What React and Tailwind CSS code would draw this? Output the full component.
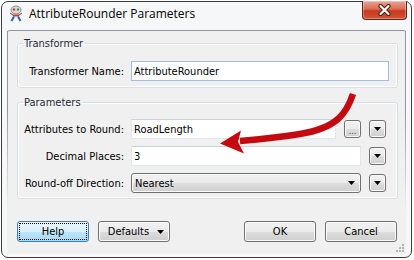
const btnFace =
  'flex items-center rounded-[3px] border border-[#707070] bg-[linear-gradient(#f2f2f2_0%,#ebebeb_50%,#dddddd_50%,#cfcfcf_100%)] shadow-[inset_0_0_0_1px_#fbfbfb]'

function DownArrow() {
  return (
    <svg width="7" height="4" viewBox="0 0 7 4">
      <path d="M0 0h7L3.5 4z" fill="#000" />
    </svg>
  )
}

function DropButton() {
  return (
    <div className={`${btnFace} ml-[8px] h-[18px] w-[17px] justify-center`}>
      <DownArrow />
    </div>
  )
}

function TextBox({ value, width, focused }) {
  return (
    <div
      className={`ml-[7px] flex h-[20px] items-center bg-white pl-[2px] ${width} ${
        focused ? 'border border-[#9dc0e3]' : 'border border-[#e1e6eb] border-t-[#cdd3da]'
      }`}
    >
      {value}
    </div>
  )
}

function Row({ label, children }) {
  return (
    <div className="flex h-[20px] items-center">
      <div className="w-[106px] text-right">{label}</div>
      {children}
    </div>
  )
}

function TitleIcon() {
  return (
    <svg width="16" height="17" viewBox="0 0 16 17">
      <ellipse cx="8" cy="5" rx="5" ry="4" fill="#d9d9d9" stroke="#8a8a8a" />
      <circle cx="6" cy="4.5" r="1.2" fill="#d23b2b" />
      <circle cx="10" cy="4.5" r="1.2" fill="#3f9b3a" />
      <path d="M4 9.5h8l-1.5 2h-5z" fill="#d8362a" />
      <path d="M6 11.5l-2.5 4.5M10 11.5l2.5 4.5" stroke="#2f5fb5" strokeWidth="2" />
      <path d="M2 8l3 2M14 8l-3 2" stroke="#777" strokeWidth="1.2" />
    </svg>
  )
}

export default function App() {
  return (
    <div className="relative h-[260px] w-[414px] overflow-hidden bg-white pl-px pt-px text-[11px] leading-[13px] text-black font-['DejaVu_Sans_Condensed','Liberation_Sans',sans-serif]">
      <div className="flex h-[257px] w-[411px] flex-col rounded-[7px] border border-[#3c3c3c] bg-[#f6f7f8]">
        <div className="flex h-[28px] items-start pl-[6px]">
          <div className="mt-[3px]">
            <TitleIcon />
          </div>
          <div className="ml-[5px] mt-[4px] text-[12px] leading-[16px] font-['Open_Sans',sans-serif]">
            AttributeRounder Parameters
          </div>
          <div className="-mt-px ml-auto mr-[4px] flex h-[19px] w-[45px] items-center justify-center rounded-b-[4px] border border-t-0 border-[#5a2a22] bg-[linear-gradient(#eaa696_0%,#dc6a52_45%,#c6391c_55%,#d45435_100%)] shadow-[inset_0_0_0_1px_rgba(255,255,255,0.3)]">
            <svg width="13" height="12" viewBox="0 0 13 12">
              <path d="M2.5 2l8 8M10.5 2l-8 8" stroke="#4a1a12" strokeWidth="4.2" strokeLinecap="round" />
              <path d="M2.5 2l8 8M10.5 2l-8 8" stroke="#fff" strokeWidth="2.2" strokeLinecap="round" />
            </svg>
          </div>
        </div>

        <div className="mx-[5px] mb-[3px] flex flex-1 rounded-t-[3px] border-t border-[#8f969e] bg-[#f0f0f0]">
          <div className="w-px bg-[linear-gradient(#8f969e_0%,#8f969e_35%,#f0f0f0_80%)]" />
          <div className="flex flex-1 flex-col">
            <fieldset className="ml-[9px] mt-[6px] w-[381px] rounded-[3px] border border-[#d5dfe5] shadow-[inset_0_0_0_1px_#fff]">
              <legend className="ml-[5px] px-[1px] leading-[13px] text-[#1e2a38]">Transformer</legend>
              <div className="pb-[6px] pt-[11px]">
                <Row label="Transformer Name:">
                  <TextBox value="AttributeRounder" width="w-[258px]" focused />
                </Row>
              </div>
            </fieldset>

            <fieldset className="ml-[9px] mt-[8px] w-[381px] rounded-[3px] border border-[#d5dfe5] shadow-[inset_0_0_0_1px_#fff]">
              <legend className="ml-[5px] px-[1px] leading-[13px] text-[#1e2a38]">Parameters</legend>
              <div className="flex flex-col gap-[7px] pb-[5px] pt-[10px]">
                <Row label="Attributes to Round:">
                  <TextBox value="RoadLength" width="w-[205px]" />
                  <div className={`${btnFace} ml-[8px] h-[18px] w-[17px] items-end justify-center pb-[2px] text-[9px] leading-[8px] text-[#1c3f8c]`}>
                    ...
                  </div>
                  <DropButton />
                </Row>
                <Row label="Decimal Places:">
                  <TextBox value="3" width="w-[230px]" />
                  <DropButton />
                </Row>
                <Row label="Round-off Direction:">
                  <div className={`${btnFace} ml-[7px] h-[20px] w-[230px] justify-between pl-[3px] pr-[5px]`}>
                    <span>Nearest</span>
                    <DownArrow />
                  </div>
                  <DropButton />
                </Row>
              </div>
            </fieldset>

            <div className="ml-[9px] mr-[8px] mt-[22px] flex">
              <div className="flex h-[21px] w-[72px] items-center justify-center rounded-[3px] border border-[#3c7fb1] bg-[linear-gradient(#eaf6fd_0%,#d9f0fc_50%,#bee6fd_50%,#a7d9f5_100%)] outline-1 outline-dotted outline-black outline-offset-[-3px]">
                Help
              </div>
              <div className={`${btnFace} ml-[9px] h-[21px] w-[72px] justify-center gap-[8px] pl-[4px]`}>
                <span>Defaults</span>
                <DownArrow />
              </div>
              <div className={`${btnFace} ml-auto h-[21px] w-[72px] justify-center`}>OK</div>
              <div className={`${btnFace} ml-[9px] h-[21px] w-[72px] justify-center`}>Cancel</div>
            </div>

            <div className="mr-[1px] mt-[2px] self-end">
              <svg width="8" height="8" viewBox="0 0 8 8" fill="#b4b4b4">
                <rect x="6" y="0" width="2" height="2" />
                <rect x="3" y="3" width="2" height="2" />
                <rect x="6" y="3" width="2" height="2" />
                <rect x="0" y="6" width="2" height="2" />
                <rect x="3" y="6" width="2" height="2" />
                <rect x="6" y="6" width="2" height="2" />
              </svg>
            </div>
          </div>
          <div className="w-px bg-[linear-gradient(#8f969e_0%,#8f969e_35%,#f0f0f0_80%)]" />
        </div>
      </div>

      <svg className="pointer-events-none absolute left-0 top-0" width="414" height="260" viewBox="0 0 414 260">
        <path d="M353 94C347 112 338 128 300 134C280 137 262 139 240 141" fill="none" stroke="#c40a10" strokeWidth="6.5" />
        <path d="M220 143.5L241 130.5L238 142L244 153.5z" fill="#c40a10" />
      </svg>
    </div>
  )
}
